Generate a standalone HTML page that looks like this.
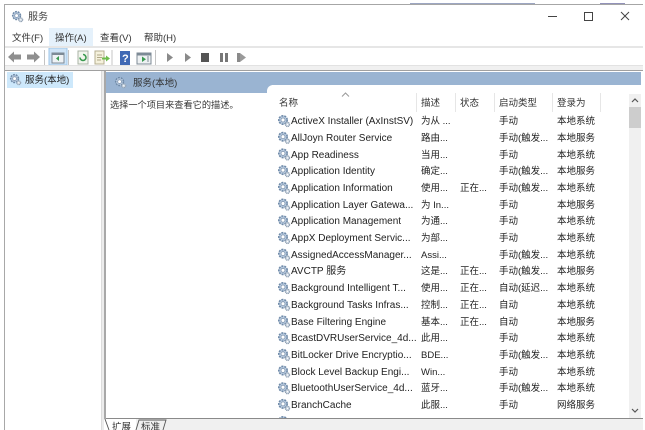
<!DOCTYPE html>
<html lang="zh"><head><meta charset="utf-8"><title>服务</title>
<style>
html,body{margin:0;padding:0;background:#fff}
#p{position:relative;width:645px;height:430px;overflow:hidden;background:#fff;font-family:"Liberation Sans","Noto Sans CJK SC",sans-serif;font-size:9.5px;color:#222;filter:blur(.3px)}
#p div,#p span,#p svg{position:absolute}
.t{white-space:nowrap;line-height:14px;margin-top:2px}
.n{left:291px;font-size:10px;margin-top:2px}
.h{top:95px;color:#333}
.s{top:93px;width:1px;height:20px;background:#e6e6e6}
</style></head><body><div id="p">
<svg width="0" height="0"><defs>
<symbol id="g" viewBox="0 0 14 14"><circle cx="6" cy="6" r="4.2" fill="#b9cbe0" stroke="#6f8aa8" stroke-width="1.6" stroke-dasharray="2 1"/><circle cx="6" cy="6" r="2" fill="#fff" stroke="#7d93ac" stroke-width=".8"/><circle cx="10.5" cy="10.5" r="2.2" fill="#c8d3df" stroke="#8b9bad" stroke-width="1" stroke-dasharray="1.2 .6"/><circle cx="10.5" cy="10.5" r=".7" fill="#fff"/></symbol>
</defs></svg>

<div style="left:4px;top:4px;width:639px;height:1px;background:#a6a6a6"></div>
<div style="left:410px;top:3px;width:125px;height:1px;background:#5a6a9a;opacity:.6"></div>
<div style="left:600px;top:3px;width:25px;height:1px;background:#4a4a8a;opacity:.6"></div>
<div style="left:4px;top:4px;width:1px;height:426px;background:#a8a8a8"></div>

<svg style="left:11px;top:10px" width="13" height="13"><use href="#g" width="13" height="13"/></svg>
<div class="t" style="left:28px;top:9px;font-size:10px;color:#444">服务</div>
<svg style="left:545px;top:8px" width="90" height="16" fill="none" stroke="#444" stroke-width="1"><path d="M3 8.500H12"/><path d="M39.500 4.500H47.500V12.500H39.500Z"/><path d="M76 4L84 12M84 4L76 12"/></svg>

<div style="left:49px;top:28px;width:44px;height:18px;background:#e5f1fb"></div>
<div class="t" style="left:12px;top:30px;color:#333">文件(F)</div>
<div class="t" style="left:55px;top:30px;color:#333">操作(A)</div>
<div class="t" style="left:100px;top:30px;color:#333">查看(V)</div>
<div class="t" style="left:144px;top:30px;color:#333">帮助(H)</div>
<div style="left:5px;top:46px;width:638px;height:2px;background:#e6e6e6"></div>

<svg style="left:5px;top:48px" width="270" height="20">
<path d="M3 9L9 3.500V6.500H16V11.500H9V14.500Z" fill="#8f8f8f"/>
<path d="M35 9L29 3.500V6.500H22V11.500H29V14.500Z" fill="#8f8f8f"/>
<path d="M39.500 2V17M63.500 2V17M107 2V17" stroke="#c4c4c4"/>
<rect x="44" y="0" width="18" height="17" fill="#cfe4f7" stroke="#9cc6ea"/>
<rect x="47" y="5" width="12" height="10" fill="#eef2f5" stroke="#7d8a96"/><rect x="47" y="5" width="12" height="2" fill="#7d8a96"/><path d="M54 8V13L51 10.500Z" fill="#3a9a50"/>
<rect x="73" y="3" width="10" height="13" fill="#f2f5ee" stroke="#aab3a5"/><path d="M75 9.500A3 3 0 1 0 78 6.500" fill="none" stroke="#3a9a50" stroke-width="1.600"/>
<rect x="90" y="3" width="9" height="13" fill="#f5f1dc" stroke="#b5ae90"/><path d="M92 7H97M92 9.500H97M92 12H96" stroke="#b0a888"/><path d="M97 9.500H101V7.500L105 10.500L101 13.500V11.500H97Z" fill="#6ebd4c"/>
<rect x="115" y="3" width="10" height="14" fill="#3f68b4"/><text x="117" y="14" font-size="11" font-weight="bold" fill="#fff" font-family="Liberation Sans">?</text>
<rect x="132" y="5" width="14" height="11" fill="#eef1f3" stroke="#7d8a96"/><rect x="132" y="5" width="14" height="2.500" fill="#7d8a96"/><path d="M137 8.500V14L141 11.200Z" fill="#3a9a50"/><path d="M143 8V14" stroke="#7d8a96"/>
<path d="M150.500 2V17" stroke="#c4c4c4"/>
<path d="M162 5V14L168 9.500Z" fill="#8a8a8a"/><path d="M180 5V14L186 9.500Z" fill="#8a8a8a"/>
<rect x="196" y="5" width="8" height="9" fill="#555"/>
<rect x="215" y="5" width="3" height="9" fill="#777"/><rect x="220" y="5" width="3" height="9" fill="#777"/>
<rect x="232" y="5" width="3" height="9" fill="#8a8a8a"/><path d="M235 5V14L241 9.500Z" fill="#9a9a9a"/>
</svg>
<div style="left:5px;top:65px;width:638px;height:5px;background:#f0f0f0;border-top:1px solid #e2e2e2;box-sizing:border-box"></div>
<div style="left:5px;top:70px;width:638px;height:1px;background:#a0a0a0"></div>

<div style="left:5px;top:71px;width:96px;height:359px;background:#fff;border-right:1px solid #dcdcdc"></div>
<div style="left:102px;top:71px;width:2px;height:359px;background:#ececec"></div>
<div style="left:7px;top:72px;width:66px;height:16px;background:#cde8fb"></div>
<svg style="left:9px;top:73px" width="13" height="13"><use href="#g" width="13" height="13"/></svg>
<div class="t" style="left:25px;top:72px">服务(本地)</div>

<div style="left:104px;top:71px;width:2px;height:348px;background:#a8a8a8"></div>
<div style="left:106px;top:72px;width:535px;height:13px;background:#9ab4d2"></div>
<div style="left:106px;top:85px;width:166px;height:8px;background:#9ab4d2"></div>
<div style="left:267px;top:85px;width:374px;height:9px;background:#fff;border-top-left-radius:6px"></div>
<svg style="left:114px;top:76px" width="13" height="13"><use href="#g" width="13" height="13"/></svg>
<div class="t" style="left:133px;top:75px;color:#333">服务(本地)</div>
<div class="t" style="left:110px;top:96px;color:#333;font-size:9.2px">选择一个项目来查看它的描述。</div>

<svg style="left:341px;top:92px" width="9" height="6" fill="none" stroke="#999"><path d="M1 4.500L4.500 1L8 4.500"/></svg>
<div class="t h" style="left:279px">名称</div>
<div class="t h" style="left:421px">描述</div>
<div class="t h" style="left:460px">状态</div>
<div class="t h" style="left:499px">启动类型</div>
<div class="t h" style="left:557px">登录为</div>
<div class="s" style="left:416px"></div><div class="s" style="left:455px"></div><div class="s" style="left:494px"></div><div class="s" style="left:552px"></div><div class="s" style="left:600px"></div>

<div style="left:267px;top:112px;width:362px;height:306px;overflow:hidden;background:#fff">
<svg style="left:10px;top:2px" width="14" height="300"><use href="#g" width="14" height="14" y="0"/><use href="#g" width="14" height="14" y="16.700"/><use href="#g" width="14" height="14" y="33.400"/><use href="#g" width="14" height="14" y="50.100"/><use href="#g" width="14" height="14" y="66.800"/><use href="#g" width="14" height="14" y="83.500"/><use href="#g" width="14" height="14" y="100.200"/><use href="#g" width="14" height="14" y="116.900"/><use href="#g" width="14" height="14" y="133.600"/><use href="#g" width="14" height="14" y="150.300"/><use href="#g" width="14" height="14" y="167"/><use href="#g" width="14" height="14" y="183.700"/><use href="#g" width="14" height="14" y="200.400"/><use href="#g" width="14" height="14" y="217.100"/><use href="#g" width="14" height="14" y="233.800"/><use href="#g" width="14" height="14" y="250.500"/><use href="#g" width="14" height="14" y="267.200"/><use href="#g" width="14" height="14" y="283.900"/></svg>
<svg style="left:10px;top:303px" width="14" height="3"><use href="#g" width="14" height="14" y="0"/></svg>
</div>

<div class="t n" style="top:113px">ActiveX Installer (AxInstSV)</div><div class="t" style="left:421px;top:113px">为从 ...</div><div class="t" style="left:499px;top:113px">手动</div><div class="t" style="left:557px;top:113px">本地系统</div>
<div class="t n" style="top:130px">AllJoyn Router Service</div><div class="t" style="left:421px;top:130px">路由...</div><div class="t" style="left:499px;top:130px">手动(触发...</div><div class="t" style="left:557px;top:130px">本地服务</div>
<div class="t n" style="top:147px">App Readiness</div><div class="t" style="left:421px;top:147px">当用...</div><div class="t" style="left:499px;top:147px">手动</div><div class="t" style="left:557px;top:147px">本地系统</div>
<div class="t n" style="top:163px">Application Identity</div><div class="t" style="left:421px;top:163px">确定...</div><div class="t" style="left:499px;top:163px">手动(触发...</div><div class="t" style="left:557px;top:163px">本地服务</div>
<div class="t n" style="top:180px">Application Information</div><div class="t" style="left:421px;top:180px">使用...</div><div class="t" style="left:460px;top:180px">正在...</div><div class="t" style="left:499px;top:180px">手动(触发...</div><div class="t" style="left:557px;top:180px">本地系统</div>
<div class="t n" style="top:197px">Application Layer Gatewa...</div><div class="t" style="left:421px;top:197px">为 In...</div><div class="t" style="left:499px;top:197px">手动</div><div class="t" style="left:557px;top:197px">本地服务</div>
<div class="t n" style="top:213px">Application Management</div><div class="t" style="left:421px;top:213px">为通...</div><div class="t" style="left:499px;top:213px">手动</div><div class="t" style="left:557px;top:213px">本地系统</div>
<div class="t n" style="top:230px">AppX Deployment Servic...</div><div class="t" style="left:421px;top:230px">为部...</div><div class="t" style="left:499px;top:230px">手动</div><div class="t" style="left:557px;top:230px">本地系统</div>
<div class="t n" style="top:247px">AssignedAccessManager...</div><div class="t" style="left:421px;top:247px">Assi...</div><div class="t" style="left:499px;top:247px">手动(触发...</div><div class="t" style="left:557px;top:247px">本地系统</div>
<div class="t n" style="top:263px">AVCTP 服务</div><div class="t" style="left:421px;top:263px">这是...</div><div class="t" style="left:460px;top:263px">正在...</div><div class="t" style="left:499px;top:263px">手动(触发...</div><div class="t" style="left:557px;top:263px">本地服务</div>
<div class="t n" style="top:280px">Background Intelligent T...</div><div class="t" style="left:421px;top:280px">使用...</div><div class="t" style="left:460px;top:280px">正在...</div><div class="t" style="left:499px;top:280px">自动(延迟...</div><div class="t" style="left:557px;top:280px">本地系统</div>
<div class="t n" style="top:297px">Background Tasks Infras...</div><div class="t" style="left:421px;top:297px">控制...</div><div class="t" style="left:460px;top:297px">正在...</div><div class="t" style="left:499px;top:297px">自动</div><div class="t" style="left:557px;top:297px">本地系统</div>
<div class="t n" style="top:314px">Base Filtering Engine</div><div class="t" style="left:421px;top:314px">基本...</div><div class="t" style="left:460px;top:314px">正在...</div><div class="t" style="left:499px;top:314px">自动</div><div class="t" style="left:557px;top:314px">本地服务</div>
<div class="t n" style="top:330px">BcastDVRUserService_4d...</div><div class="t" style="left:421px;top:330px">此用...</div><div class="t" style="left:499px;top:330px">手动</div><div class="t" style="left:557px;top:330px">本地系统</div>
<div class="t n" style="top:347px">BitLocker Drive Encryptio...</div><div class="t" style="left:421px;top:347px">BDE...</div><div class="t" style="left:499px;top:347px">手动(触发...</div><div class="t" style="left:557px;top:347px">本地系统</div>
<div class="t n" style="top:364px">Block Level Backup Engi...</div><div class="t" style="left:421px;top:364px">Win...</div><div class="t" style="left:499px;top:364px">手动</div><div class="t" style="left:557px;top:364px">本地系统</div>
<div class="t n" style="top:380px">BluetoothUserService_4d...</div><div class="t" style="left:421px;top:380px">蓝牙...</div><div class="t" style="left:499px;top:380px">手动(触发...</div><div class="t" style="left:557px;top:380px">本地系统</div>
<div class="t n" style="top:397px">BranchCache</div><div class="t" style="left:421px;top:397px">此服...</div><div class="t" style="left:499px;top:397px">手动</div><div class="t" style="left:557px;top:397px">网络服务</div>

<div style="left:629px;top:94px;width:12px;height:324px;background:#f0f0f0"></div>
<svg style="left:629px;top:94px" width="12" height="12" fill="none" stroke="#555" stroke-width="1.200"><path d="M3 8L6 5L9 8"/></svg>
<div style="left:629px;top:107px;width:12px;height:21px;background:#cdcdcd"></div>
<svg style="left:629px;top:405px" width="12" height="12" fill="none" stroke="#555" stroke-width="1.200"><path d="M3 4L6 7L9 4"/></svg>

<div style="left:106px;top:418px;width:537px;height:12px;background:#f0f0f0;border-top:1px solid #8a8a8a;box-sizing:border-box"></div>
<div style="left:106px;top:419px;width:30px;height:11px;background:#fff"></div>
<svg style="left:104px;top:418px" width="70" height="12" fill="none" stroke="#555"><path d="M1 1L5 12M32 12L35 2H62L59 12" stroke-width=".9"/></svg>
<div class="t" style="left:112px;top:419px;color:#333">扩展</div>
<div class="t" style="left:141px;top:419px;color:#333">标准</div>
</div></body></html>
